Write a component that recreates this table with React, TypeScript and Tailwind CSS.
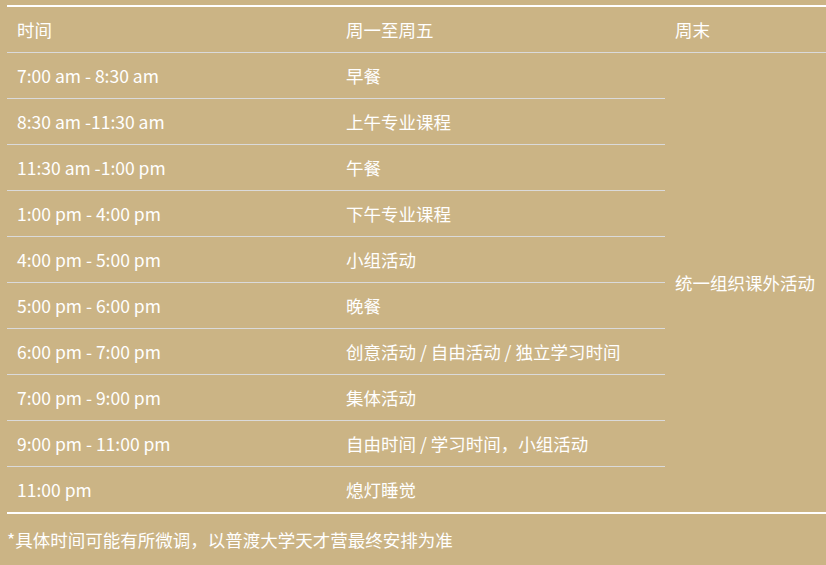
import React from "react";

const rows: [string, string][] = [
  ["7:00 am - 8:30 am", "早餐"],
  ["8:30 am -11:30 am", "上午专业课程"],
  ["11:30 am -1:00 pm", "午餐"],
  ["1:00 pm - 4:00 pm", "下午专业课程"],
  ["4:00 pm - 5:00 pm", "小组活动"],
  ["5:00 pm - 6:00 pm", "晚餐"],
  ["6:00 pm - 7:00 pm", "创意活动 / 自由活动 / 独立学习时间"],
  ["7:00 pm - 9:00 pm", "集体活动"],
  ["9:00 pm - 11:00 pm", "自由时间 / 学习时间，小组活动"],
  ["11:00 pm", "熄灯睡觉"],
];

export default function App() {
  return (
    <div
      className="w-[826px] h-[565px] overflow-hidden bg-[#cbb485] text-white text-[17.5px] leading-[24px]"
      style={{ fontFamily: '"Noto Sans CJK SC", sans-serif' }}
    >
      <div className="pt-[5px] pl-[7px]">
        <div className="w-[987px] border-t-2 border-white">
          <div className="grid grid-cols-[329px_329px_329px]">
            <div className="h-[46px] border-b border-[#dadada] flex items-center px-[10px]">时间</div>
            <div className="h-[46px] border-b border-[#dadada] flex items-center px-[10px]">周一至周五</div>
            <div className="h-[46px] border-b border-[#dadada] flex items-center px-[10px]">周末</div>
          </div>
          <div className="grid grid-cols-[329px_329px_329px] border-b-2 border-white">
            {rows.map(([t, a], i) => (
              <React.Fragment key={i}>
                <div
                  className={
                    i < rows.length - 1
                      ? "h-[46px] border-b border-[#dadada] flex items-center px-[10px]"
                      : "h-[45px] flex items-center px-[10px]"
                  }
                  style={{ gridColumn: 1, gridRow: i + 1 }}
                >
                  {t}
                </div>
                <div
                  className={
                    i < rows.length - 1
                      ? "h-[46px] border-b border-[#dadada] flex items-center px-[10px]"
                      : "h-[45px] flex items-center px-[10px]"
                  }
                  style={{ gridColumn: 2, gridRow: i + 1 }}
                >
                  {a}
                </div>
              </React.Fragment>
            ))}
            <div className="col-start-3 row-start-1 row-span-10 flex items-center px-[10px]">
              统一组织课外活动
            </div>
          </div>
        </div>
        <div className="pt-[14px]">*具体时间可能有所微调，以普渡大学天才营最终安排为准</div>
      </div>
    </div>
  );
}
